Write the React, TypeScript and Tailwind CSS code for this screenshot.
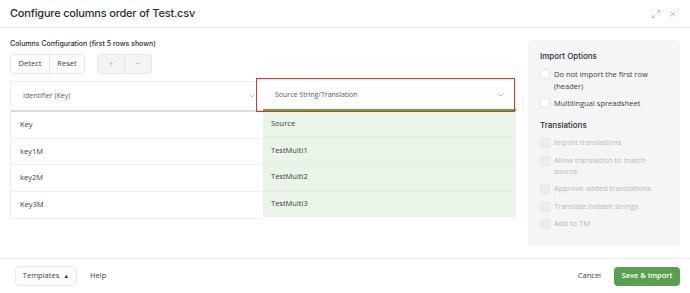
import { ChevronDown, Maximize2, X } from "lucide-react";

const rows = [
  ["Key", "Source"],
  ["key1M", "TestMulti1"],
  ["key2M", "TestMulti2"],
  ["Key3M", "TestMulti3"],
];

const importOptions = [
  { label: "Do not import the first row (header)" },
  { label: "Multilingual spreadsheet" },
];

const translationOptions = [
  "Import translations",
  "Allow translation to match source",
  "Approve added translations",
  "Translate hidden strings",
  "Add to TM",
];

function Checkbox({ disabled }: { disabled?: boolean }) {
  return (
    <span
      className={
        disabled
          ? "mt-[1px] h-[10px] w-[10px] shrink-0 rounded-[2px] border border-[#e3e5e8] bg-[#eceef1]"
          : "mt-[1px] h-[10px] w-[10px] shrink-0 rounded-[2px] border border-[#e3e5e8] bg-white"
      }
    />
  );
}

export default function App() {
  return (
    <div className="flex h-[293px] w-[690px] flex-col bg-white font-['Open_Sans',sans-serif] text-[#3a3d42]">
      {/* header */}
      <header className="flex h-[28px] shrink-0 items-center justify-between border-b border-[#eeeff1] pl-[10px] pr-[12px]">
        <h1 className="font-['Inter',sans-serif] text-[11px] font-medium tracking-[-0.2px] text-[#2b2e33]">
          Configure columns order of Test.csv
        </h1>
        <div className="flex items-center gap-[7px] text-[#a3a8ae]">
          <Maximize2 size={10} strokeWidth={1.6} />
          <X size={10} strokeWidth={1.6} />
        </div>
      </header>

      {/* body */}
      <div className="flex flex-1 gap-[12px] px-[10px] pt-[12px]">
        <div className="w-[506px]">
          <p className="font-['Inter',sans-serif] text-[7px] font-medium leading-[8px] text-[#2b2e33]">
            Columns Configuration (first 5 rows shown)
          </p>
          <div className="mt-[6px] flex gap-[12px]">
            <div className="flex h-[20px] rounded-[4px] border border-[#e6e8eb] text-[7.5px] text-[#3a3d42]">
              <button className="w-[39px] border-r border-[#e6e8eb]">Detect</button>
              <button className="w-[34px]">Reset</button>
            </div>
            <div className="flex h-[20px] rounded-[4px] border border-[#e6e8eb] bg-[#f3f4f6] text-[9px] text-[#b7bbc0]">
              <button className="w-[27px] border-r border-[#e3e5e8]">+</button>
              <button className="w-[26px]">−</button>
            </div>
          </div>

          <div className="relative mt-[7px] flex">
            {/* key column */}
            <div className="w-[253px] border border-[#efefef] border-r-0">
              <div className="flex h-[30px] items-center justify-between border-b-2 border-[#dcdcdc] pl-[12px] pr-[7px] text-[7px] text-[#55595f]">
                <span>Identifier (Key)</span>
                <ChevronDown size={8} strokeWidth={1.6} className="text-[#8a8f95]" />
              </div>
              {rows.map(([k], i) => (
                <div
                  key={k}
                  className={
                    i < rows.length - 1
                      ? "flex h-[26.5px] items-center border-b border-[#f1f1f1] pl-[9px] text-[7.5px]"
                      : "flex h-[26.5px] items-center pl-[9px] text-[7.5px]"
                  }
                >
                  {k}
                </div>
              ))}
            </div>
            {/* source column */}
            <div className="w-[253px]">
              <div className="flex h-[30px] items-center justify-between border-b-2 border-[#55a84c] bg-white pl-[12px] pr-[11px] text-[7px] text-[#55595f]">
                <span>Source String/Translation</span>
                <ChevronDown size={8} strokeWidth={1.6} className="text-[#8a8f95]" />
              </div>
              {rows.map(([, s], i) => (
                <div
                  key={s}
                  className={
                    i < rows.length - 1
                      ? "flex h-[26.5px] items-center border-b border-[#e2eedf] bg-[#eaf4e7] pl-[8px] text-[7.5px]"
                      : "flex h-[26.5px] items-center bg-[#eaf4e7] pl-[8px] text-[7.5px]"
                  }
                >
                  {s}
                </div>
              ))}
            </div>
            {/* highlight annotation */}
            <div className="pointer-events-none absolute left-[246px] top-[-3px] h-[34px] w-[259px] border-[1.5px] border-[#e8321e]" />
          </div>
        </div>

        {/* options panel */}
        <aside className="h-[206px] w-[152px] rounded-[5px] bg-[#f4f5f7] px-[12px] pt-[11px]">
          <h2 className="font-['Inter',sans-serif] text-[8px] font-medium leading-[10px] text-[#2b2e33]">
            Import Options
          </h2>
          <div className="mt-[7px] flex flex-col gap-[5px]">
            {importOptions.map((o) => (
              <label key={o.label} className="flex gap-[4px] text-[7.5px] leading-[12px] text-[#3a3d42]">
                <Checkbox />
                <span className="pr-[6px]">{o.label}</span>
              </label>
            ))}
          </div>
          <h2 className="mt-[11px] font-['Inter',sans-serif] text-[8px] font-medium leading-[10px] text-[#2b2e33]">
            Translations
          </h2>
          <div className="mt-[7px] flex flex-col gap-[6.5px]">
            {translationOptions.map((t) => (
              <label key={t} className="flex gap-[4px] text-[7.5px] leading-[11px] text-[#b6b9be]">
                <Checkbox disabled />
                <span className="pr-[14px]">{t}</span>
              </label>
            ))}
          </div>
        </aside>
      </div>

      {/* footer */}
      <footer className="flex h-[35px] shrink-0 items-center justify-between border-t border-[#eeeff1] pl-[15px] pr-[10px]">
        <div className="flex items-center gap-[13px]">
          <button className="flex h-[20px] w-[62px] items-center justify-center gap-[4px] rounded-[4px] border border-[#e6e8eb] text-[7.5px] text-[#3a3d42]">
            Templates <span className="text-[6px]">▲</span>
          </button>
          <span className="text-[7.5px] text-[#3a3d42]">Help</span>
        </div>
        <div className="flex items-center gap-[13px]">
          <span className="text-[7.5px] text-[#3a3d42]">Cancel</span>
          <button className="h-[19px] w-[66px] rounded-[4px] bg-[#5a9f4f] text-[7.5px] font-semibold text-white">
            Save &amp; Import
          </button>
        </div>
      </footer>
    </div>
  );
}
